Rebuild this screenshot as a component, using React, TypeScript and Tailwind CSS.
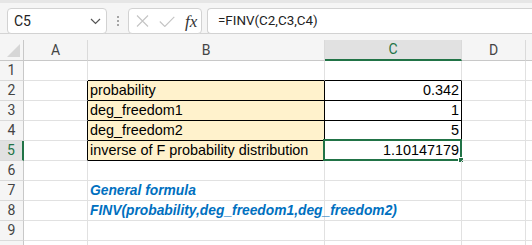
// Excel-like sheet: FINV example with formula bar
const CELL_FONT = "font-['Liberation_Sans',Arial,sans-serif]";
const UI_FONT = "font-['Segoe_UI',Roboto,'Liberation_Sans',sans-serif]";

type Cell = {
  text?: string;
  align?: "left" | "right";
  fill?: boolean;
  right?: "grid" | "black";
  bottom?: "grid" | "black";
  formula?: boolean;
  selected?: boolean;
};

const rows: { n: number; a: Cell; b: Cell; c: Cell; d: Cell }[] = [
  { n: 1, a: {}, b: { bottom: "black" }, c: { bottom: "black" }, d: {} },
  {
    n: 2,
    a: { right: "black" },
    b: { text: "probability", fill: true, right: "black", bottom: "black" },
    c: { text: "0.342", align: "right", right: "black", bottom: "black" },
    d: {},
  },
  {
    n: 3,
    a: { right: "black" },
    b: { text: "deg_freedom1", fill: true, right: "black", bottom: "black" },
    c: { text: "1", align: "right", right: "black", bottom: "black" },
    d: {},
  },
  {
    n: 4,
    a: { right: "black" },
    b: { text: "deg_freedom2", fill: true, right: "black", bottom: "black" },
    c: { text: "5", align: "right", right: "black", bottom: "black" },
    d: {},
  },
  {
    n: 5,
    a: { right: "black" },
    b: { text: "inverse of F probability distribution", fill: true, right: "black", bottom: "black" },
    c: { text: "1.10147179", align: "right", right: "black", bottom: "black", selected: true },
    d: {},
  },
  { n: 6, a: {}, b: {}, c: {}, d: {} },
  { n: 7, a: {}, b: { text: "General formula", formula: true }, c: {}, d: {} },
  { n: 8, a: {}, b: { text: "FINV(probability,deg_freedom1,deg_freedom2)", formula: true }, c: {}, d: {} },
  { n: 9, a: {}, b: {}, c: {}, d: {} },
  { n: 10, a: {}, b: {}, c: {}, d: {} },
];

function SheetCell({ cell, width }: { cell: Cell; width: string }) {
  const rightCls = cell.right === "black" ? "border-r-black" : "border-r-[#e1e1e1]";
  const bottomCls = cell.bottom === "black" ? "border-b-black" : "border-b-[#e1e1e1]";
  return (
    <div
      className={`relative h-[20px] shrink-0 border-r border-b ${rightCls} ${bottomCls} ${width} ${
        cell.fill ? "bg-[#fff2cc]" : ""
      } flex items-end pb-[1px] ${cell.align === "right" ? "justify-end pr-[2px]" : "pl-[2px]"}`}
    >
      {cell.text && (
        <span
          className={`whitespace-nowrap leading-[17px] ${CELL_FONT} ${
            cell.formula
              ? "text-[13.8px] font-bold italic text-[#0070c0]"
              : "text-[14.4px] text-black"
          }`}
        >
          {cell.text}
        </span>
      )}
      {cell.selected && (
        <>
          <div className="absolute -left-[2px] -top-[2px] -right-[1px] -bottom-[1px] border-2 border-[#217346]" />
          <div className="absolute -right-[3px] -bottom-[3px] h-[6px] w-[6px] border border-white bg-[#217346]" />
        </>
      )}
    </div>
  );
}

export default function App() {
  return (
    <div className="h-[245px] w-[532px] overflow-hidden bg-white">
      {/* formula bar */}
      <div className="h-[3px] bg-[#e6e6e6]" />
      <div className="flex h-[31px] items-start border-b border-[#d4d4d4] bg-[#f5f5f5] pt-[5px]">
        <div className="ml-[7px] flex h-[26px] w-[100px] items-center justify-between rounded-[4px] border border-[#d2d2d2] bg-white pl-[6px] pr-[5px]">
          <span className={`text-[14px] text-[#222] ${UI_FONT}`}>C5</span>
          <svg width="11" height="7" viewBox="0 0 11 7" fill="none">
            <path d="M1 1l4.5 4.5L10 1" stroke="#555" strokeWidth="1.2" />
          </svg>
        </div>
        <div className="flex h-[26px] w-[21px] flex-col items-center justify-center gap-[2px]">
          <span className="h-[2px] w-[2px] rounded-full bg-[#8a8a8a]" />
          <span className="h-[2px] w-[2px] rounded-full bg-[#8a8a8a]" />
          <span className="h-[2px] w-[2px] rounded-full bg-[#8a8a8a]" />
        </div>
        <div className="flex h-[26px] w-[74px] items-center rounded-[4px] border border-[#d2d2d2] bg-white pl-[6px]">
          <svg width="13" height="12" viewBox="0 0 13 12" fill="none" className="ml-[1px]">
            <path d="M1 0.5l11 11M12 0.5l-11 11" stroke="#c4c4c4" strokeWidth="1.1" />
          </svg>
          <svg width="16" height="11" viewBox="0 0 16 11" fill="none" className="ml-[10px]">
            <path d="M0.8 5.5l5 5L15.3 0.8" stroke="#c4c4c4" strokeWidth="1.1" />
          </svg>
          <span className="ml-[10px] font-['Liberation_Serif',serif] text-[17px] italic leading-none text-[#333]">
            fx
          </span>
        </div>
        <div className="ml-[5px] flex h-[26px] flex-1 items-center rounded-l-[4px] border border-r-0 border-[#d2d2d2] bg-white pl-[10px]">
          <span className={`text-[13.4px] text-[#222] ${UI_FONT}`}>=FINV(C2,C3,C4)</span>
        </div>
      </div>

      {/* column headers */}
      <div className={`flex h-[27px] bg-[#f5f5f5] pt-[6px] ${UI_FONT} text-[14px] text-[#444]`}>
        <div className="relative h-[21px] w-[24px] shrink-0 border-r border-b border-[#c8c8c8]">
          <svg width="14" height="14" viewBox="0 0 14 14" className="absolute left-[7px] top-[4px]">
            <path d="M13 0V13H0Z" fill="#d6d6d6" />
          </svg>
        </div>
        <div className="flex h-[21px] w-[64px] shrink-0 items-center justify-center border-r border-b border-r-[#dadada] border-b-[#c8c8c8]">
          A
        </div>
        <div className="flex h-[21px] w-[237px] shrink-0 items-center justify-center border-r border-b border-r-[#dadada] border-b-[#c8c8c8]">
          B
        </div>
        <div className="flex h-[21px] w-[137px] shrink-0 items-center justify-center border-r border-b-2 border-r-[#dadada] border-b-[#217346] bg-[#e1e1e1] text-[#217346]">
          C
        </div>
        <div className="flex h-[21px] w-[64px] shrink-0 items-center justify-center border-r border-b border-r-[#dadada] border-b-[#c8c8c8]">
          D
        </div>
        <div className="h-[21px] flex-1 border-b border-[#c8c8c8]" />
      </div>

      {/* rows */}
      {rows.map((r) => (
        <div key={r.n} className="flex">
          <div
            className={`flex h-[20px] w-[24px] shrink-0 items-center justify-center border-b border-b-[#dadada] ${UI_FONT} text-[14px] ${
              r.n === 5
                ? "border-r-2 border-r-[#217346] bg-[#e1e1e1] text-[#217346]"
                : "border-r border-r-[#c8c8c8] bg-[#f5f5f5] text-[#444]"
            }`}
          >
            {r.n < 10 ? r.n : ""}
          </div>
          <SheetCell cell={r.a} width="w-[64px]" />
          <SheetCell cell={r.b} width="w-[237px]" />
          <SheetCell cell={r.c} width="w-[137px]" />
          <SheetCell cell={r.d} width="w-[64px]" />
          <div className="h-[20px] flex-1 border-b border-[#e1e1e1]" />
        </div>
      ))}
    </div>
  );
}
